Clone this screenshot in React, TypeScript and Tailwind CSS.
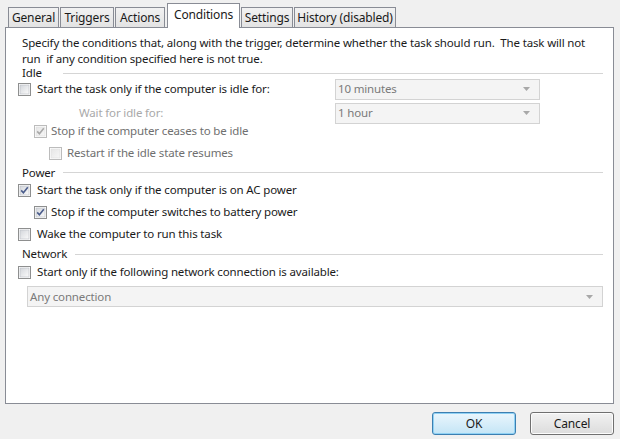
import React from "react";

const font = { fontFamily: '"Noto Sans", "Open Sans", Arial, sans-serif' };

const Check = ({ checked = false, disabled = false }: { checked?: boolean; disabled?: boolean }) => (
  <svg width="13" height="13" viewBox="0 0 13 13" className="shrink-0">
    <defs>
      <linearGradient id={disabled ? "cbd" : "cbn"} x1="0" y1="0" x2="1" y2="1">
        <stop offset="0" stopColor={disabled ? "#e6e6e6" : "#d3d6db"} />
        <stop offset="1" stopColor={disabled ? "#f7f7f7" : "#fbfbfb"} />
      </linearGradient>
    </defs>
    <rect x="0.5" y="0.5" width="12" height="12" fill="#fff" stroke={disabled ? "#bcbcbc" : "#8e8f8f"} />
    <rect x="2" y="2" width="9" height="9" fill={`url(#${disabled ? "cbd" : "cbn"})`} stroke={disabled ? "#dedede" : "#b9bcc4"} strokeWidth="0.6" />
    {checked && (
      <path
        d="M3.2 6.4 L5.4 8.8 L9.8 3.3"
        fill="none"
        stroke={disabled ? "#a9a9a9" : "#4b5d8c"}
        strokeWidth="1.6"
      />
    )}
  </svg>
);

const Combo = ({ value, className }: { value: string; className: string }) => (
  <div
    className={`flex h-[21px] items-center justify-between border border-[#d3d3d3] bg-[#f4f4f4] pl-[2px] pr-[9px] text-[#7a7a7a] ${className}`}
  >
    <span>{value}</span>
    <svg width="7" height="4" viewBox="0 0 7 4">
      <path d="M0 0 H7 L3.5 4 Z" fill="#a8a8a8" />
    </svg>
  </div>
);

const Section = ({ label, className }: { label: string; className: string }) => (
  <div className={`flex items-center pl-[16px] pr-[10px] ${className}`}>
    <span className="mr-[8px] min-w-[33px] leading-none">{label}</span>
    <div className="h-px flex-1 bg-[#d5d5d5]" />
  </div>
);

const tabs = [
  { name: "General", w: "w-[51px]" },
  { name: "Triggers", w: "w-[54px]" },
  { name: "Actions", w: "w-[50px]" },
  { name: "Conditions", w: "w-[73px]", active: true },
  { name: "Settings", w: "w-[52px]" },
  { name: "History (disabled)", w: "w-[102px]" },
];

export default function App() {
  return (
    <div
      className="h-[439px] w-[620px] overflow-hidden bg-[#f0f0f0] text-[11.5px] tracking-[-0.15px] text-[#1a1a1a]"
      style={font}
    >
      {/* Tabs */}
      <div className="flex h-[27px] items-end pl-[8px] pt-[3px]">
        {tabs.map((t) =>
          t.active ? (
            <div
              key={t.name}
              className={`relative z-10 mx-[1px] -mb-px flex h-[25px] items-center justify-center border border-b-0 border-[#898c95] bg-white pb-[3px] text-[12px] ${t.w}`}
            >
              {t.name}
            </div>
          ) : (
            <div
              key={t.name}
              className={`mr-[1px] flex h-[20px] items-center justify-center border border-b-0 border-[#898c95] bg-gradient-to-b from-[#f2f2f2] to-[#e3e3e3] text-[12px] ${t.w}`}
            >
              {t.name}
            </div>
          )
        )}
      </div>

      {/* Panel */}
      <div className="ml-[5px] h-[377px] w-[609px] border border-[#898c95] bg-white">
        <div className="h-[7px]" />
        <div className="whitespace-nowrap pl-[16px] leading-[16px]">
          Specify the conditions that, along with the trigger, determine whether the task should run.&nbsp; The task will not
          <br />
          run&nbsp; if any condition specified here is not true.
        </div>

        <Section label="Idle" className="h-[12px]" />

        <div className="flex h-[20px] items-center">
          <div className="flex w-[329px] items-center gap-[6px] pl-[12px]">
            <Check />
            <span>Start the task only if the computer is idle for:</span>
          </div>
          <Combo value="10 minutes" className="w-[205px]" />
        </div>

        <div className="mt-[4px] flex h-[20px] items-center">
          <div className="w-[329px] pl-[73px] text-[#a9a9a9]">Wait for idle for:</div>
          <Combo value="1 hour" className="w-[205px]" />
        </div>

        <div className="flex h-[16px] items-center gap-[4px] pl-[28px] text-[#6f6f6f]">
          <Check checked disabled />
          <span>Stop if the computer ceases to be idle</span>
        </div>

        <div className="mt-[3px] flex h-[22px] items-center gap-[5px] pl-[43px] text-[#6f6f6f]">
          <Check disabled />
          <span>Restart if the idle state resumes</span>
        </div>

        <Section label="Power" className="mt-[2px] h-[13px]" />

        <div className="flex h-[22px] items-center gap-[6px] pl-[12px]">
          <Check checked />
          <span>Start the task only if the computer is on AC power</span>
        </div>
        <div className="flex h-[22px] items-center gap-[4px] pl-[28px]">
          <Check checked />
          <span>Stop if the computer switches to battery power</span>
        </div>
        <div className="flex h-[22px] items-center gap-[6px] pl-[12px]">
          <Check />
          <span>Wake the computer to run this task</span>
        </div>

        <Section label="Network" className="h-[18px]" />

        <div className="mt-[1px] flex h-[16px] items-center gap-[6px] pl-[12px]">
          <Check />
          <span>Start only if the following network connection is available:</span>
        </div>

        <div className="mt-[6px] pl-[21px]">
          <Combo value="Any connection" className="w-[576px]" />
        </div>
      </div>

      {/* Buttons */}
      <div className="mt-[8px] flex justify-end gap-[14px] pr-[6px]">
        <button className="flex h-[23px] w-[84px] items-center justify-center rounded-[3px] border border-[#3c7fb1] bg-gradient-to-b from-[#eaf6fd] to-[#c4e5f6] text-[12px] shadow-[inset_0_0_0_1px_#8fd1f4]">
          OK
        </button>
        <button className="flex h-[23px] w-[84px] items-center justify-center rounded-[3px] border border-[#707070] bg-gradient-to-b from-[#f2f2f2] to-[#dcdcdc] text-[12px] shadow-[inset_0_0_0_1px_#fcfcfc]">
          Cancel
        </button>
      </div>
    </div>
  );
}
